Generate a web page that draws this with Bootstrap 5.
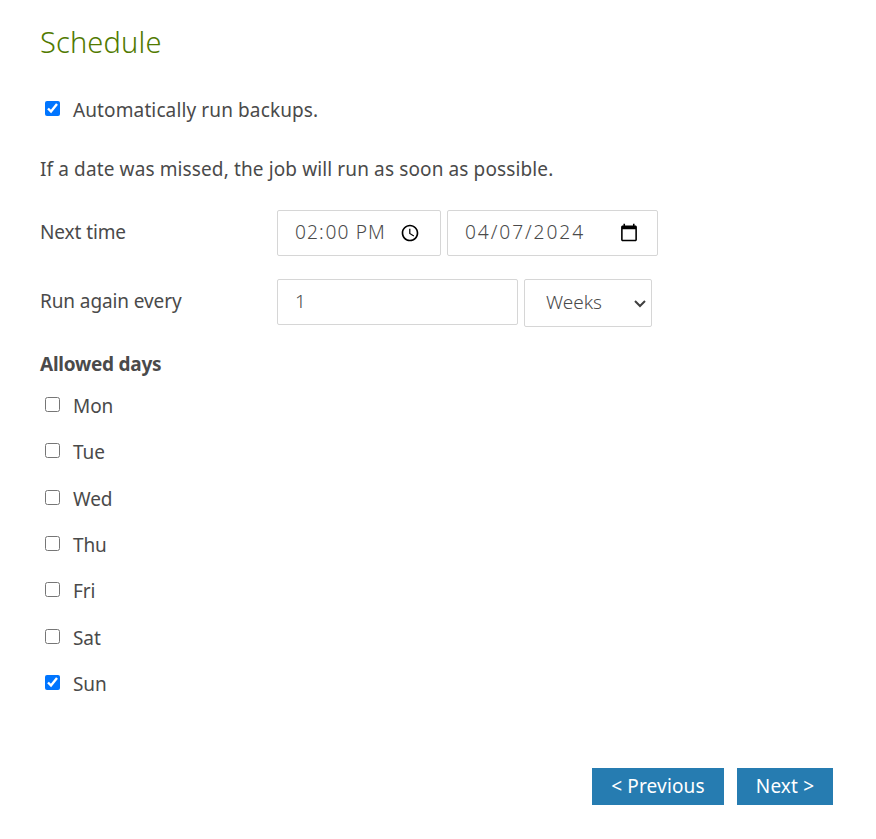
<!DOCTYPE html>
<html lang="en-US">
<head>
<meta charset="utf-8">
<meta name="viewport" content="width=device-width, initial-scale=1">
<title>Schedule</title>
<link href="https://cdn.jsdelivr.net/npm/bootstrap@5.3.0/dist/css/bootstrap.min.css" rel="stylesheet">
<style>
body { font-family: "Noto Sans", "Open Sans", sans-serif; font-size: 19px; line-height: 28px; color: #4a4a4a; background: #fff; }
.schedule { padding: 23px 43px 0 40px; }
.title { font-size: 29px; line-height: 38px; font-weight: 300; color: #517a00; letter-spacing: .15px; }
.option { height: 28px; }
.option input { width: 15px; height: 15px; margin: 5px 13px 0 5px; accent-color: #0075ff; }
.intro { letter-spacing: .12px; }
.fields { gap: 6px; }
.label-col { width: 237px; }
.label-col, .days, .heading { letter-spacing: -.1px; }
.heading { letter-spacing: -.25px; }
.box { height: 46px; border: 1px solid #d6d6d6; border-radius: 2px; padding: 0 17px 2px; color: #4a4a4a; background: #fff; font-weight: 300; }
.time-box { width: 164px; letter-spacing: 1px; font-size: 19.2px; }
.date-box { width: 211px; letter-spacing: 1.9px; font-size: 19.2px; }
.count-box { width: 241px; }
.box::-webkit-calendar-picker-indicator { position: relative; top: 1px; left: .5px; }
.unit-wrap { position: relative; }
.unit-wrap svg { position: absolute; right: 5px; top: 20px; pointer-events: none; }
.unit-box { width: 128px; height: 48px; padding: 0 0 2px 21px; appearance: none; display: block; }
.days { display: grid; grid-auto-rows: 46.35px; }
.step-btn { height: 37px; border-radius: 0; border: 0; padding: 0; font-size: 19px; line-height: 37px; background: #267cb1; color: #fff; letter-spacing: .15px; }
.prev { width: 132px; }
.next { width: 96px; }
</style>
</head>
<body>
<form class="schedule">
  <h1 class="title mb-0">Schedule</h1>
  <label class="option intro d-flex align-items-start" style="margin-top:35px"><input type="checkbox" checked><span>Automatically run backups.</span></label>
  <p class="intro mb-0" style="margin-top:31px">If a date was missed, the job will run as soon as possible.</p>
  <div class="d-flex align-items-start" style="margin-top:27px">
    <label class="label-col" style="padding-top:8px" for="t">Next time</label>
    <div class="d-flex fields"><input id="t" class="box time-box" type="time" value="14:00"><input class="box date-box" type="date" value="2024-04-07" aria-label="Date"></div>
  </div>
  <div class="d-flex align-items-start" style="margin-top:23px">
    <label class="label-col" style="padding-top:8px" for="n">Run again every</label>
    <div class="d-flex align-items-start fields"><input id="n" class="box count-box" type="text" value="1"><div class="unit-wrap"><select class="box unit-box" aria-label="Unit"><option>Weeks</option></select><svg width="14" height="10" viewBox="0 0 14 10" fill="none" stroke="#3f3f3f" stroke-width="2"><path d="M2 2l5 5 5-5"/></svg></div></div>
  </div>
  <div class="heading fw-bold" style="margin-top:23px">Allowed days</div>
  <div class="days" style="margin-top:14px">
    <label class="option d-flex align-items-start"><input type="checkbox"><span>Mon</span></label>
    <label class="option d-flex align-items-start"><input type="checkbox"><span>Tue</span></label>
    <label class="option d-flex align-items-start"><input type="checkbox"><span>Wed</span></label>
    <label class="option d-flex align-items-start"><input type="checkbox"><span>Thu</span></label>
    <label class="option d-flex align-items-start"><input type="checkbox"><span>Fri</span></label>
    <label class="option d-flex align-items-start"><input type="checkbox"><span>Sat</span></label>
    <label class="option d-flex align-items-start"><input type="checkbox" checked><span>Sun</span></label>
  </div>
  <div class="d-flex justify-content-end" style="gap:13px;margin-top:51.6px">
    <button type="button" class="btn step-btn prev">&lt; Previous</button>
    <button type="button" class="btn step-btn next">Next &gt;</button>
  </div>
</form>
<script src="https://cdn.jsdelivr.net/npm/bootstrap@5.3.0/dist/js/bootstrap.bundle.min.js"></script>
</body>
</html>
